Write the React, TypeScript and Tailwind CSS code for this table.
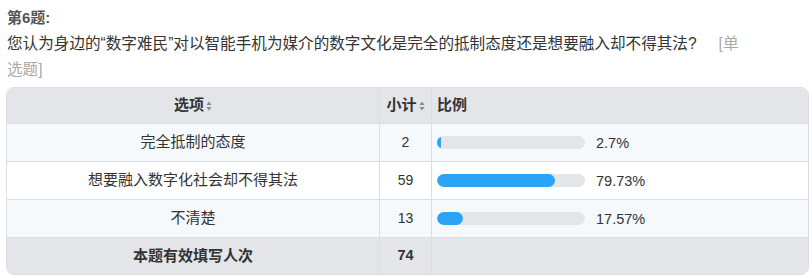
import React from "react";

const font = { fontFamily: '"Liberation Sans", "Noto Sans CJK SC", sans-serif' };

function SortIcon() {
  return (
    <svg width="6" height="10" viewBox="0 0 6 10" className="inline-block ml-[2px] align-[-1px]">
      <path d="M3 0.5 L5.5 4 L0.5 4 Z" fill="#8a8a8a" />
      <path d="M3 9.5 L5.5 6 L0.5 6 Z" fill="#8a8a8a" />
    </svg>
  );
}

const rows = [
  { label: "完全抵制的态度", count: 2, pct: 2.7, text: "2.7%" },
  { label: "想要融入数字化社会却不得其法", count: 59, pct: 79.73, text: "79.73%" },
  { label: "不清楚", count: 13, pct: 17.57, text: "17.57%" },
];

export default function App() {
  return (
    <div className="w-[812px] h-[278px] bg-white text-[15px] text-[#333]" style={font}>
      <div className="pl-[7px] pt-[5px]">
        <div className="font-bold text-[#555] leading-[26px]">第6题:</div>
        <div className="w-[743px] leading-[26px] text-[15.6px]">
          您认为身边的“数字难民”对以智能手机为媒介的数字文化是完全的抵制态度还是想要融入却不得其法?
          <span className="ml-[22px] text-[#aaa]">[单选题]</span>
        </div>
      </div>
      <div className="ml-[6px] mt-[4px] w-[803px] border border-[#dcdde1] rounded-[8px] overflow-hidden">
        <div className="grid grid-cols-[373px_52px_1fr]">
          <div className="h-[36px] bg-[#e4e5e9] flex items-center justify-center font-bold border-r border-b border-[#dcdde1]">
            选项<SortIcon />
          </div>
          <div className="h-[36px] bg-[#e4e5e9] flex items-center justify-center font-bold border-r border-b border-[#dcdde1]">
            小计<SortIcon />
          </div>
          <div className="h-[36px] bg-[#e4e5e9] flex items-center pl-[5px] font-bold border-b border-[#dcdde1]">
            比例
          </div>
          {rows.map((r, i) => {
            const bg = i % 2 === 0 ? "bg-[#f5f9fc]" : "bg-white";
            return (
              <React.Fragment key={i}>
                <div className={`h-[38px] ${bg} flex items-center justify-center border-r border-b border-[#dcdde1]`}>
                  {r.label}
                </div>
                <div className={`h-[38px] ${bg} flex items-center justify-center text-[14px] border-r border-b border-[#dcdde1]`}>
                  {r.count}
                </div>
                <div className={`h-[38px] ${bg} flex items-center pl-[5px] border-b border-[#dcdde1]`}>
                  <div className="w-[148px] h-[13px] rounded-full bg-[#e4e5e9] overflow-hidden">
                    <div className="h-full rounded-full bg-[#2aa4f7]" style={{ width: `${Math.max(r.pct, 3)}%` }} />
                  </div>
                  <span className="ml-[11px] text-[14.5px] pt-[3px]">{r.text}</span>
                </div>
              </React.Fragment>
            );
          })}
          <div className="h-[36px] bg-[#e4e5e9] flex items-center justify-center font-bold border-r border-[#dcdde1]">
            本题有效填写人次
          </div>
          <div className="h-[36px] bg-[#e4e5e9] flex items-center justify-center font-bold text-[14.5px] border-r border-[#dcdde1]">
            74
          </div>
          <div className="h-[36px] bg-[#e4e5e9]" />
        </div>
      </div>
    </div>
  );
}
